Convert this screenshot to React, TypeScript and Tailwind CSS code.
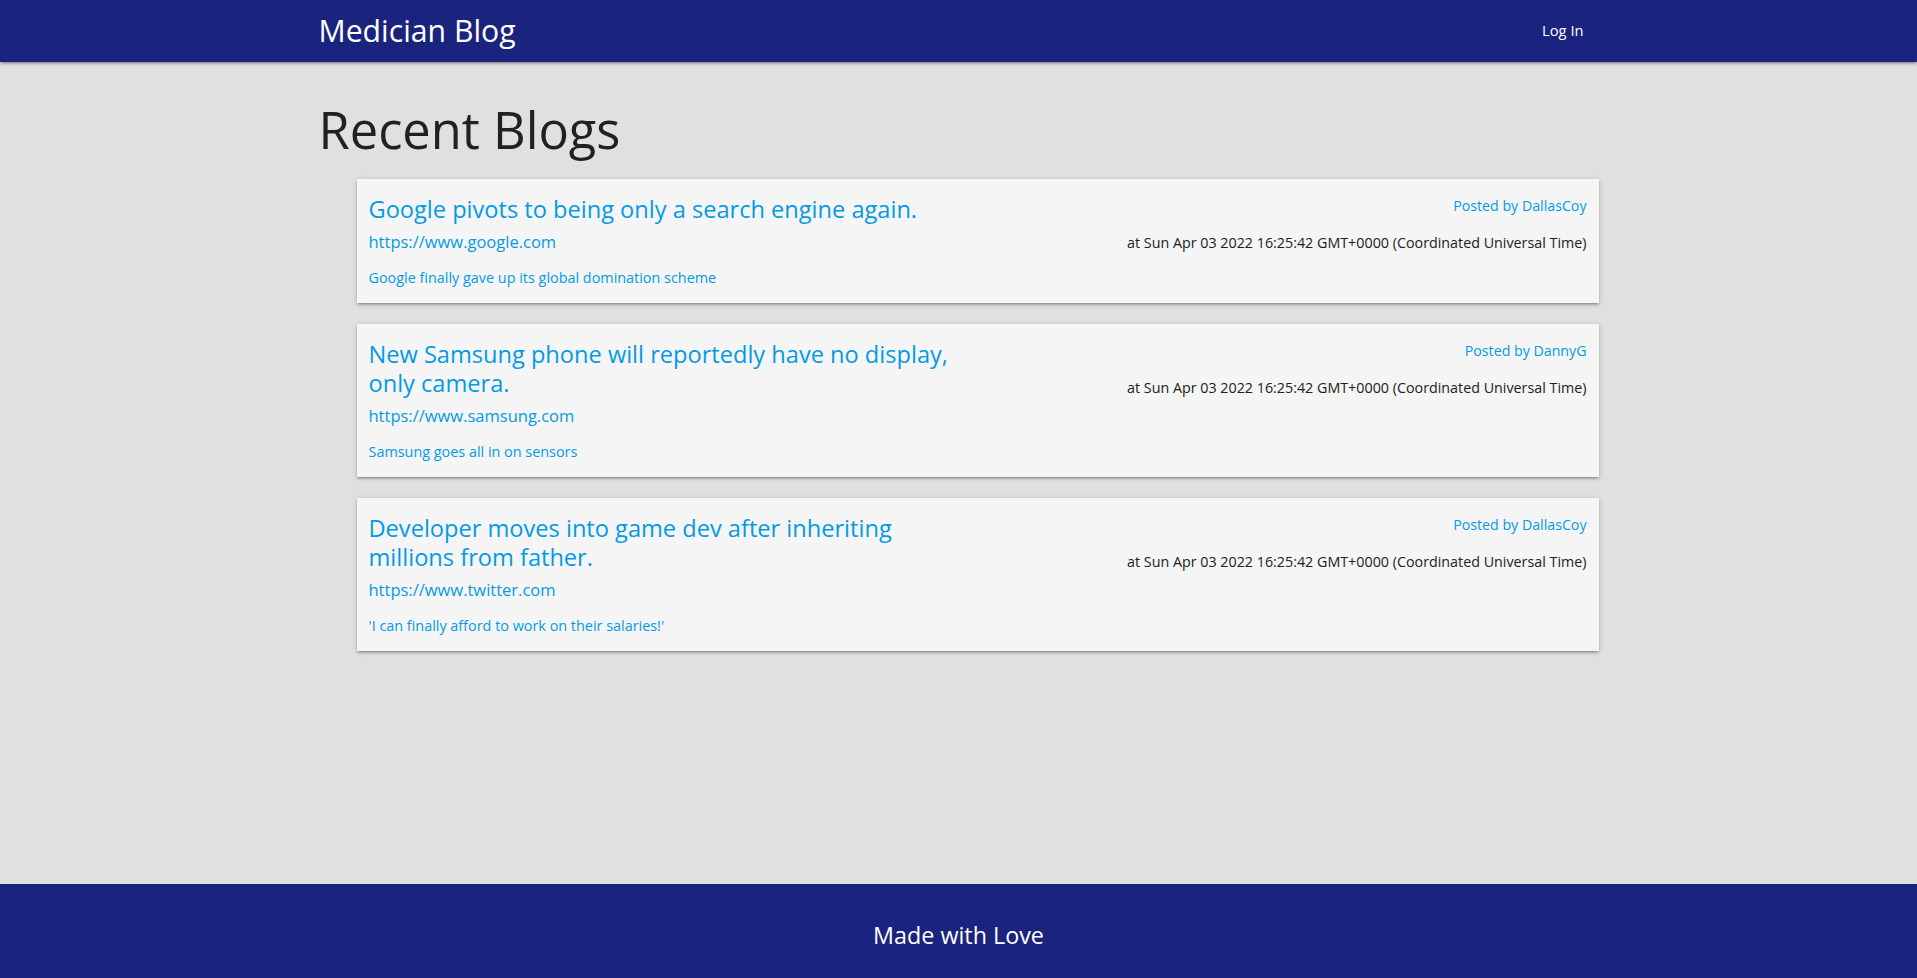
import React from "react";

const posts = [
  {
    title: "Google pivots to being only a search engine again.",
    url: "https://www.google.com",
    desc: "Google finally gave up its global domination scheme",
    author: "DallasCoy",
  },
  {
    title: "New Samsung phone will reportedly have no display, only camera.",
    url: "https://www.samsung.com",
    desc: "Samsung goes all in on sensors",
    author: "DannyG",
  },
  {
    title: "Developer moves into game dev after inheriting millions from father.",
    url: "https://www.twitter.com",
    desc: "'I can finally afford to work on their salaries!'",
    author: "DallasCoy",
  },
];

const date = "Sun Apr 03 2022 16:25:42 GMT+0000 (Coordinated Universal Time)";

export default function App() {
  return (
    <div className="min-h-screen flex flex-col bg-[#e0e0e0] font-['Open_Sans',sans-serif]">
      <nav className="h-[62px] bg-[#1a237e] shadow-[0_2px_2px_0_rgba(0,0,0,0.14),0_3px_1px_-2px_rgba(0,0,0,0.12),0_1px_5px_0_rgba(0,0,0,0.2)] relative z-10">
        <div className="mx-auto w-[1280px] h-full flex items-center justify-between">
          <a className="text-[30.2px] text-white leading-none">Medician Blog</a>
          <a className="px-[15px] pb-[2px] text-[14.7px] text-white leading-none">Log In</a>
        </div>
      </nav>
      <main className="flex-1">
        <div className="mx-auto w-[1280px]">
          <h2 className="text-[50.6px] leading-[1.1] mt-[40px] mb-[21px] text-[#212121]">Recent Blogs</h2>
          <ul className="pl-[38px] flex flex-col gap-[21px]">
            {posts.map((p, i) => (
              <li
                key={i}
                className="flex bg-[#f5f5f5] shadow-[0_2px_2px_0_rgba(0,0,0,0.14),0_3px_1px_-2px_rgba(0,0,0,0.12),0_1px_5px_0_rgba(0,0,0,0.2)]"
              >
                <div className="w-1/2 pl-[12px] pt-[16px] pb-[14px]">
                  <h5 className="text-[23.6px] leading-[28.5px] text-[#039be5]">{p.title}</h5>
                  <a className="block mt-[7px] text-[16.5px] leading-[24px] text-[#039be5]">{p.url}</a>
                  <p className="mt-[13px] text-[14.4px] leading-[22px] text-[#039be5]">{p.desc}</p>
                </div>
                <div className="w-1/2 pr-[12px] pt-[16px] text-right">
                  <p className="text-[14.2px] leading-[22px] text-[#039be5]">Posted by {p.author}</p>
                  <p className="mt-[15px] text-[14.3px] leading-[22px] text-[#212121]">at {date}</p>
                </div>
              </li>
            ))}
          </ul>
        </div>
      </main>
      <footer className="h-[94px] pt-[8px] bg-[#1a237e] flex items-center justify-center">
        <span className="text-white text-[23.3px]">Made with Love</span>
      </footer>
    </div>
  );
}
